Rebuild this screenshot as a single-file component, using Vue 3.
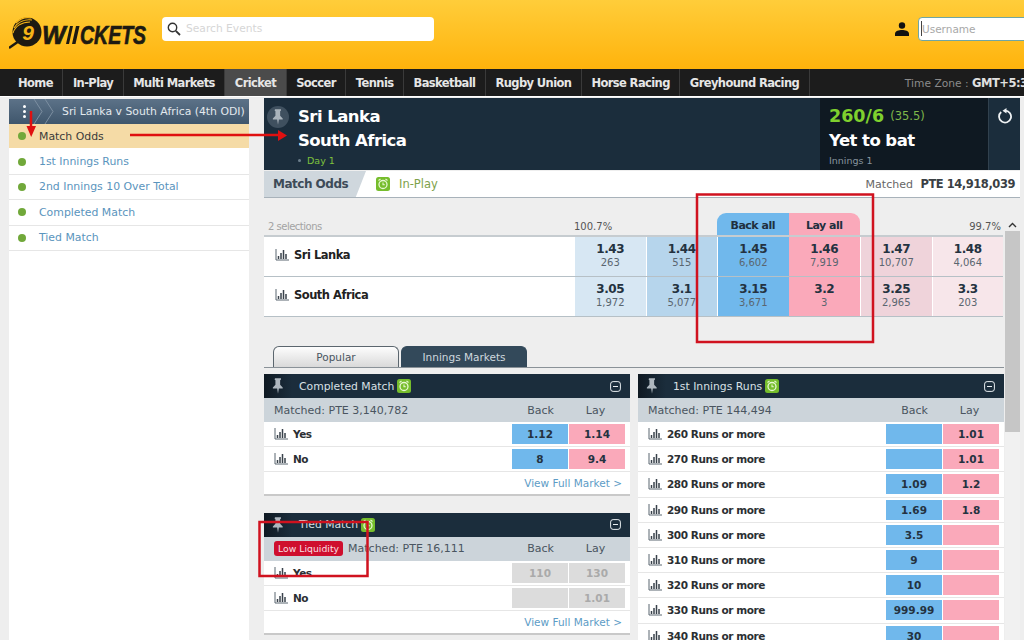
<script setup>
const navItems = ['Home', 'In-Play', 'Multi Markets', 'Cricket', 'Soccer', 'Tennis', 'Basketball', 'Rugby Union', 'Horse Racing', 'Greyhound Racing']
const sideItems = ['Match Odds', '1st Innings Runs', '2nd Innings 10 Over Total', 'Completed Match', 'Tied Match']

const runners = [
  { name: 'Sri Lanka', cells: [['1.43', '263'], ['1.44', '515'], ['1.45', '6,602'], ['1.46', '7,919'], ['1.47', '10,707'], ['1.48', '4,064']] },
  { name: 'South Africa', cells: [['3.05', '1,972'], ['3.1', '5,077'], ['3.15', '3,671'], ['3.2', '3'], ['3.25', '2,965'], ['3.3', '203']] },
]

const leftPanels = [
  {
    title: 'Completed Match', matched: 'Matched: PTE 3,140,782', more: true,
    rows: [
      { name: 'Yes', back: '1.12', lay: '1.14' },
      { name: 'No', back: '8', lay: '9.4' },
    ],
  },
  {
    title: 'Tied Match', matched: 'Matched: PTE 16,111', more: true, low: true,
    rows: [
      { name: 'Yes', back: '110', lay: '130' },
      { name: 'No', back: '', lay: '1.01' },
    ],
  },
]

const rightPanel = {
  title: '1st Innings Runs', matched: 'Matched: PTE 144,494',
  rows: [
    { name: '260 Runs or more', back: '', lay: '1.01' },
    { name: '270 Runs or more', back: '', lay: '1.01' },
    { name: '280 Runs or more', back: '1.09', lay: '1.2' },
    { name: '290 Runs or more', back: '1.69', lay: '1.8' },
    { name: '300 Runs or more', back: '3.5', lay: '' },
    { name: '310 Runs or more', back: '9', lay: '' },
    { name: '320 Runs or more', back: '10', lay: '' },
    { name: '330 Runs or more', back: '999.99', lay: '' },
    { name: '340 Runs or more', back: '30', lay: '' },
  ],
}

const columns = [
  { panels: leftPanels },
  { panels: [rightPanel] },
]
</script>

<template>
  <div class="page">
    <svg class="defs" width="0" height="0">
      <symbol id="bars" viewBox="0 0 14 12">
        <path d="M1 0v11h13" fill="none" stroke="#5b6670" stroke-width="1" />
        <path d="M3.5 7v3M6 4v6M8.500 1v9M11 5v5" fill="none" stroke="#39424b" stroke-width="1.5" />
      </symbol>
      <symbol id="pin" viewBox="0 0 14 18">
        <path d="M3.500 0h7v1.500l-1 .8v5.200l3 3.200v1.300h-4.500l-1 6h-.0l-1-6H1v-1.300l3-3.200V2.300l-1-.8z" fill="currentColor" />
      </symbol>
      <symbol id="clock" viewBox="0 0 14 14">
        <rect width="14" height="14" rx="2.500" fill="#76bd2c" />
        <circle cx="7" cy="7.500" r="4" fill="none" stroke="#e6f7d2" stroke-width="1.300" />
        <path d="M7 5.500v2.200h1.800M2.500 3.500l2-1.500M11.500 3.500l-2-1.500" fill="none" stroke="#e6f7d2" stroke-width="1.100" />
      </symbol>
    </svg>

    <header class="top">
      <svg class="logo" width="146" height="36" viewBox="0 0 146 36">
        <circle cx="18" cy="17" r="14.500" fill="#1d1a12" />
        <path d="M7 8c4-4 10-6 15-5M5 13c4-6 11-9 18-8M4 18C6 11 13 7 21 7" fill="none" stroke="#f6b417" stroke-width="1.100" />
        <path d="M0 33 10 26" stroke="#1d1a12" stroke-width="2.500" />
        <text x="19" y="25" class="logo-nine" text-anchor="middle">9</text>
        <text transform="translate(33 29)" class="logo-word">W</text>
        <path d="M61 11h3l-4 18h-3zM67 11h3.500l-4 18H63z" fill="#1d1a12" />
        <text transform="translate(71 29) scale(.78 1)" class="logo-word">CKETS</text>
      </svg>

      <div class="search">
        <svg width="14" height="14" viewBox="0 0 14 14">
          <circle cx="5.500" cy="5.500" r="4.200" fill="none" stroke="#333" stroke-width="1.400" />
          <path d="M8.800 8.800 13 13" stroke="#333" stroke-width="1.800" />
        </svg>
        <span>Search Events</span>
      </div>

      <div class="login">
        <svg width="14" height="14" viewBox="0 0 14 14">
          <circle cx="7" cy="3.500" r="3.200" fill="#111" />
          <path d="M0 14v-2.500C0 9 4 8 7 8s7 1 7 3.500V14z" fill="#111" />
        </svg>
        <div class="username"><i class="caret"></i>Username</div>
      </div>
    </header>

    <nav class="nav">
      <a v-for="item in navItems" :key="item" class="nav-item" :class="{ active: item === 'Cricket' }">{{ item }}</a>
      <div class="zone">Time Zone : <b>GMT+5:30</b></div>
    </nav>

    <div class="body">
      <aside class="side">
        <div class="crumb">
          <span class="dots"><i></i><i></i><i></i></span>
          <svg width="24" height="25" viewBox="0 0 24 25">
            <path d="M1 0l8 12.500-8 12.500M12 0l8 12.500-8 12.500" fill="none" stroke="#7c8fa1" stroke-width="1" />
          </svg>
          <span class="crumb-text">Sri Lanka v South Africa (4th ODI)</span>
        </div>
        <div v-for="(item, i) in sideItems" :key="item" class="side-row" :class="{ current: i === 0 }">
          <i class="dot"></i>{{ item }}
        </div>
      </aside>

      <main class="main">
        <section class="event">
          <div class="pin-round"><svg width="12" height="16"><use href="#pin" /></svg></div>
          <div class="teams">
            <div class="team">Sri Lanka</div>
            <div class="team">South Africa</div>
            <div class="day"><i></i>Day 1</div>
          </div>
          <div class="score">
            <div class="runs">260/6 <small>(35.5)</small></div>
            <div class="team">Yet to bat</div>
            <div class="innings">Innings 1</div>
          </div>
          <div class="refresh">
            <svg width="16" height="16" viewBox="0 0 16 16">
              <path d="M4.200 4A6 6 0 1 0 8 2.600" fill="none" stroke="#eef1f3" stroke-width="1.800" />
              <path d="M9.500 0v5.500L5.500 2.800z" fill="#eef1f3" />
            </svg>
          </div>
        </section>

        <section class="subhead">
          <div class="subtab">Match Odds</div>
          <svg class="sub-clock" width="14" height="14"><use href="#clock" /></svg>
          <span class="inplay">In-Play</span>
          <div class="matched">Matched <b>PTE 14,918,039</b></div>
        </section>

        <div class="scroller">
          <div class="content">
            <div class="book-head">
              <span class="sel">2 selections</span>
              <span class="pct">100.7%</span>
              <span></span>
              <span class="all back-all">Back all</span>
              <span class="all lay-all">Lay all</span>
              <span></span>
              <span class="pct right">99.7%</span>
            </div>
            <div v-for="r in runners" :key="r.name" class="book-row">
              <div class="runner"><svg width="14" height="12"><use href="#bars" /></svg>{{ r.name }}</div>
              <div v-for="(c, i) in r.cells" :key="i" class="price" :class="'p' + i">
                <b>{{ c[0] }}</b><span>{{ c[1] }}</span>
              </div>
            </div>

            <div class="tabs">
              <div class="tab">Popular</div>
              <div class="tab on">Innings Markets</div>
            </div>

            <div class="grid">
              <div v-for="(col, n) in columns" :key="n" class="col">
                <div v-for="p in col.panels" :key="p.title" class="panel" :class="{ bare: !p.more }">
                  <div class="panel-title">
                    <span class="panel-pin"><svg width="12" height="16"><use href="#pin" /></svg></span>
                    <span>{{ p.title }}</span>
                    <svg class="panel-clock" width="14" height="14"><use href="#clock" /></svg>
                    <svg class="minus" width="11" height="11" viewBox="0 0 11 11">
                      <rect x=".6" y=".6" width="9.800" height="9.800" rx="2.500" fill="none" stroke="#e8edf0" />
                      <path d="M3 5.500h5" stroke="#e8edf0" />
                    </svg>
                  </div>
                  <div class="panel-sub">
                    <span v-if="p.low" class="low">Low Liquidity</span>
                    <span class="panel-matched">{{ p.matched }}</span>
                    <span class="head-cell">Back</span>
                    <span class="head-cell">Lay</span>
                  </div>
                  <div v-for="row in p.rows" :key="row.name" class="mrow">
                    <svg width="14" height="12"><use href="#bars" /></svg>
                    <span class="mname">{{ row.name }}</span>
                    <span class="odd b" :class="{ off: p.low }">{{ row.back }}</span>
                    <span class="odd l" :class="{ off: p.low }">{{ row.lay }}</span>
                  </div>
                  <div v-if="p.more" class="more">View Full Market &gt;</div>
                </div>
              </div>
            </div>
          </div>

          <div class="scrollbar">
            <svg width="9" height="6" viewBox="0 0 9 6"><path d="M1 5l3.500-3.500L8 5" fill="none" stroke="#333" stroke-width="1.400" /></svg>
            <div class="thumb"></div>
          </div>
        </div>
      </main>
    </div>

    <svg class="marks" width="1024" height="640" viewBox="0 0 1024 640">
      <rect x="697" y="194.500" width="176" height="147.500" fill="none" stroke="#d0121f" stroke-width="2.500" />
      <path d="M259.500 522H367.500V576H259.500z" fill="none" stroke="#d0121f" stroke-width="2.500" />
      <path d="M31 111V128" stroke="#e01010" stroke-width="2.500" />
      <path d="M26.500 126h9.500l-4.800 11z" fill="#e01010" />
      <path d="M130 135H279" stroke="#e01010" stroke-width="2.500" />
      <path d="M278 130l9 5.500-9 5.500z" fill="#e01010" />
    </svg>
  </div>
</template>

<style scoped>
.page {
  position: relative;
  display: flex;
  flex-direction: column;
  width: 1024px;
  height: 640px;
  overflow: hidden;
  background: #eeeeee;
  color: #333;
  font-family: "DejaVu Sans", "Noto Sans", sans-serif;
  font-size: 11px;
}
.defs { position: absolute; }
.marks { position: absolute; top: 0; left: 0; pointer-events: none; }

.top {
  display: flex;
  align-items: center;
  flex: none;
  height: 69px;
  padding: 0 0 12px 9px;
  box-sizing: border-box;
  background: linear-gradient(#ffcd3a, #ffb30c);
}
.logo { flex: none; margin-top: 8px; }
.logo-nine { font: italic bold 21px "Liberation Sans", sans-serif; fill: #f6b417; }
.logo-word { font: italic bold 25px "Liberation Sans", sans-serif; fill: #1d1a12; stroke: #1d1a12; stroke-width: .7px; }
.search {
  display: flex;
  align-items: center;
  gap: 5px;
  width: 272px;
  height: 24px;
  margin-left: 7px;
  padding-left: 5px;
  box-sizing: border-box;
  background: #fff;
  border-radius: 4px;
  color: #d6d6d6;
  font-size: 10.700px;
}
.login {
  display: flex;
  align-items: center;
  gap: 9px;
  margin-left: auto;
  margin-right: -24px;
}
.username {
  display: flex;
  align-items: center;
  width: 130px;
  height: 24px;
  padding-left: 2px;
  box-sizing: border-box;
  background: #fff;
  border: 1px solid #6fa6a4;
  border-radius: 4px;
  color: #a8a8a8;
  font-size: 10.500px;
}
.caret { width: 1px; height: 15px; background: #444; }

.nav {
  display: flex;
  flex: none;
  align-items: stretch;
  height: 28px;
  padding-left: 8.500px;
  box-sizing: border-box;
  background: #1c1c1c;
  border-bottom: 1px solid #fff;
}
.nav-item {
  display: flex;
  align-items: center;
  padding: 1px 9.500px 0;
  border-right: 1px solid #3a3a3a;
  color: #e6e6e6;
  font-size: 11.500px;
  font-weight: 700;
  letter-spacing: -.6px;
}
.nav-item.active { background: #4b4b4b; }
.zone {
  flex: none;
  margin-left: auto;
  margin-right: -11px;
  padding-top: 1px;
  align-self: center;
  color: #8b8b8b;
  font-size: 10.700px;
  white-space: nowrap;
}
.zone b { color: #e0e0e0; font-size: 11.500px; letter-spacing: -.5px; }

.body { display: flex; flex: 1; min-height: 0; }

.side {
  flex: none;
  width: 240px;
  margin: 2px 15px 0 9px;
  background: #fff;
}
.crumb {
  display: flex;
  align-items: center;
  height: 25px;
  background: linear-gradient(#5c7288, #3f566c);
  color: #e3e9ee;
  font-size: 10.850px;
}
.crumb svg { flex: none; margin-left: 7px; }
.dots { display: flex; flex-direction: column; gap: 2px; margin-left: 14px; }
.dots i { width: 3px; height: 3px; background: #fff; border-radius: 50%; }
.crumb-text { margin-left: 5px; white-space: nowrap; }
.side-row {
  display: flex;
  align-items: center;
  height: 24.400px;
  border-bottom: 1px solid #e6e6e6;
  color: #5a94bd;
  font-size: 10.900px;
}
.side-row.current { background: #f5dba6; color: #3b3b3b; border-bottom-color: #fff; }
.dot {
  width: 8px;
  height: 8px;
  margin: 0 13px 0 9px;
  border-radius: 50%;
  background: #71a83a;
}

.main { display: flex; flex-direction: column; flex: none; width: 756px; min-height: 0; margin-top: 1px; }

.event {
  display: flex;
  flex: none;
  height: 72px;
  background: #1b2d3c;
  color: #fff;
}
.pin-round {
  display: flex;
  align-items: center;
  justify-content: center;
  width: 22px;
  height: 22px;
  margin: 8px 0 0 3px;
  border-radius: 50%;
  background: #3f505f;
  color: #aab4bc;
}
.teams { flex: 1; margin-left: 9px; padding-top: 7px; }
.team { height: 24px; line-height: 24px; font-size: 16.500px; font-weight: 700; letter-spacing: -.55px; white-space: nowrap; }
.day { display: flex; align-items: center; gap: 6px; margin-top: 2px; color: #7ec13c; font-size: 9.500px; }
.day i { width: 3px; height: 3px; border-radius: 50%; background: #6d7f8d; }
.score {
  flex: none;
  width: 159px;
  padding: 6px 0 0 9px;
  background: #0f1922;
}
.runs { height: 25px; line-height: 24px; color: #7fd02e; font-size: 17.500px; font-weight: 700; white-space: nowrap; }
.runs small { color: #7fb84a; font-size: 11.500px; font-weight: 400; vertical-align: 2px; }
.innings { margin-top: 2px; color: #87949e; font-size: 9.500px; }
.refresh {
  flex: none;
  width: 32px;
  padding: 10px 0 0 8px;
  box-sizing: border-box;
  background: #1b2d3c;
  border-left: 1px solid #31414e;
}

.subhead {
  display: flex;
  flex: none;
  align-items: center;
  height: 27px;
  margin-top: 1px;
  box-sizing: border-box;
  background: #fff;
  border-bottom: 1px solid #a8b2ba;
}
.subtab {
  display: flex;
  align-items: center;
  align-self: stretch;
  width: 102px;
  padding-left: 9px;
  box-sizing: border-box;
  background: #cfd7dd;
  clip-path: polygon(0 0, 100% 0, 90% 100%, 0 100%);
  color: #3d4b58;
  font-size: 12px;
  font-weight: 700;
  letter-spacing: -.5px;
  white-space: nowrap;
}
.sub-clock { margin-left: 10px; }
.inplay { margin-left: 9px; color: #7ea24a; font-size: 11.500px; }
.matched { margin-left: auto; padding-right: 5px; color: #666; font-size: 11px; }
.matched b { margin-left: 4px; color: #3a3f44; font-size: 11.500px; letter-spacing: -.45px; }

.scroller { display: flex; flex: 1; min-height: 0; }
.content { flex: none; width: 740px; }
.scrollbar {
  display: flex;
  flex-direction: column;
  align-items: center;
  width: 15px;
  margin-left: 1px;
  padding-top: 24px;
  box-sizing: border-box;
  background: linear-gradient(#eeeeee 33px, #f1f1f1 33px);
}
.thumb { align-self: stretch; height: 201px; margin-top: 3px; background: #c6c6c6; }

.book-head {
  display: grid;
  grid-template-columns: 310px repeat(6, 1fr);
  align-items: end;
  height: 37px;
  width: 739px;
  border-bottom: 2px solid #c6ccd0;
  font-size: 10px;
}
.sel { padding: 0 0 3px 4px; color: #a3a3a3; font-size: 10px; letter-spacing: -.5px; }
.pct { padding-bottom: 3px; color: #555; }
.pct.right { text-align: right; padding-right: 2px; }
.all {
  display: flex;
  align-items: center;
  justify-content: center;
  height: 22px;
  padding-top: 2px;
  box-sizing: border-box;
  color: #20303e;
  font-size: 11px;
  font-weight: 700;
  letter-spacing: -.5px;
}
.back-all { background: #70b8ec; border-radius: 9px 0 0 0; }
.lay-all { background: #faa9ba; border-radius: 0 9px 0 0; }

.book-row {
  display: grid;
  grid-template-columns: 310px repeat(6, 1fr);
  width: 739px;
  height: 40px;
  box-sizing: border-box;
  background: #fff;
  border-bottom: 1px solid #b6c0c6;
}
.runner {
  display: flex;
  align-items: center;
  gap: 5px;
  padding: 0 0 3px 11px;
  color: #222;
  font-size: 11.500px;
  font-weight: 700;
  letter-spacing: -.5px;
}
.price {
  display: flex;
  flex-direction: column;
  align-items: center;
  justify-content: center;
  padding-bottom: 2px;
  box-sizing: border-box;
  border-left: 1px solid #fff;
  color: #5a6670;
  font-size: 10px;
  line-height: 14px;
}
.price b { color: #243240; font-size: 12px; letter-spacing: -.4px; }
.p0 { background: #d7e7f3; }
.p1 { background: #b6d5ec; }
.p2 { background: #70b8ec; }
.p3 { background: #faa9ba; border-left: 0; }
.p4 { background: #efd3da; }
.p5 { background: #f7e6ea; }

.tabs {
  display: flex;
  gap: 2px;
  height: 22px;
  margin-top: 29px;
  padding-left: 9px;
  border-bottom: 1px solid #8a9298;
  box-sizing: border-box;
  width: 740px;
}
.tab {
  display: flex;
  align-items: center;
  justify-content: center;
  width: 126px;
  box-sizing: border-box;
  border: 1px solid #5b666e;
  border-bottom: 0;
  border-radius: 6px 6px 0 0;
  background: linear-gradient(#fdfdfd, #d9d9d9);
  color: #4a5560;
  font-size: 10.500px;
}
.tab.on { background: #33495a; color: #cfd8de; border-color: #33495a; }

.grid { display: flex; gap: 8px; margin-top: 6px; }
.col { flex: none; width: 366px; }
.panel {
  margin-bottom: 16.500px;
  background: #fff;
  border-bottom: 2px solid #c9c9c9;
}
.panel.bare { border-bottom: 0; }
.panel-title {
  display: flex;
  align-items: center;
  height: 24px;
  background: #1b2d3c;
  color: #d9e0e5;
  font-size: 10.800px;
}
.panel-pin {
  display: flex;
  align-items: center;
  justify-content: center;
  align-self: stretch;
  width: 28px;
  margin-right: 7px;
  background: linear-gradient(90deg, #0f1922, #1b2d3c);
  color: #aeb7bf;
}
.panel-clock { margin-left: 3px; }
.minus { margin-left: auto; margin-right: 9px; }
.panel-sub {
  display: flex;
  align-items: center;
  height: 24px;
  padding: 0 7px 0 10px;
  background: #ccd4da;
  color: #4a5560;
  font-size: 11px;
}
.low {
  margin-right: 5px;
  padding: 1px 4px;
  border-radius: 3px;
  background: #cf0f2e;
  color: #f9dfe2;
  font-size: 9.300px;
  line-height: 13px;
  white-space: nowrap;
}
.panel-matched { flex: 1; white-space: nowrap; }
.head-cell { width: 55px; text-align: center; }
.mrow {
  display: flex;
  align-items: center;
  height: 25.200px;
  padding: 0 5px 0 10px;
  box-sizing: border-box;
  border-bottom: 1px solid #e6e6e6;
  font-weight: 700;
  color: #2b2f33;
}
.mname { flex: 1; margin-left: 5px; font-size: 10.500px; letter-spacing: -.45px; }
.odd {
  display: flex;
  align-items: center;
  justify-content: center;
  width: 56px;
  height: 20px;
  color: #243240;
  font-size: 10.500px;
}
.odd.b { margin-right: 1px; background: #70b8ec; }
.odd.l { background: #faa9ba; }
.odd.off { background: #dcdcdc; color: #aaa; }
.more {
  height: 22px;
  padding-right: 8px;
  line-height: 22px;
  text-align: right;
  color: #5d9cc6;
  font-size: 10.500px;
}
</style>

<style>
html, body { margin: 0; background: #eeeeee; overflow: hidden; }
</style>
